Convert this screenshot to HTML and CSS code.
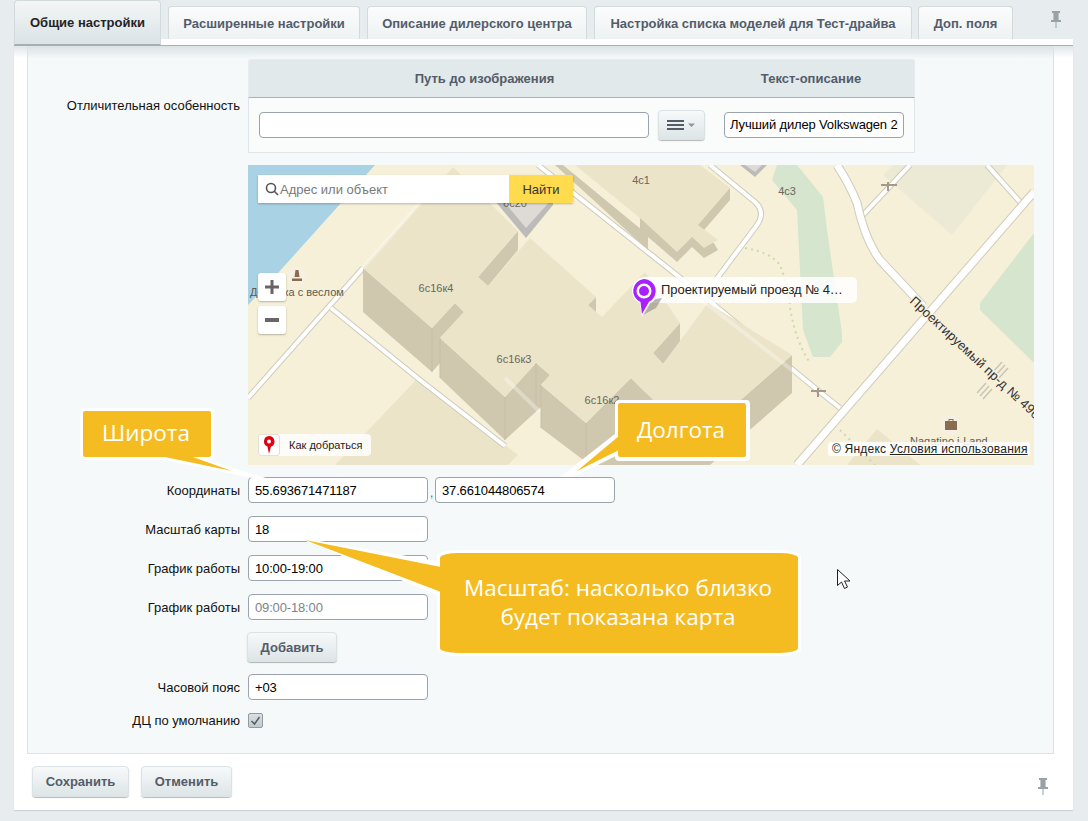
FILE: index.html
```html
<!DOCTYPE html>
<html lang="ru">
<head>
<meta charset="utf-8">
<title>Настройки</title>
<link rel="stylesheet" href="styles.css">
</head>
<body>
<div class="page">
  <nav class="tabs">
    <a class="tab tab-active">Общие настройки</a>
    <a class="tab tab-w1">Расширенные настройки</a>
    <a class="tab tab-w2">Описание дилерского центра</a>
    <a class="tab tab-w3">Настройка списка моделей для Тест-драйва</a>
    <a class="tab tab-w4">Доп. поля</a>
    <svg class="pin pin-top" width="12" height="17" viewBox="0 0 12 17"><path class="pin-fill" d="M2 0h8v2H8.600v7H11v2H6.500v6h-1v-6H1V9h2.400V2H2z"/></svg>
  </nav>
  <div class="panel">
    <div class="strip"></div>
    <div class="panel-body">
      <div class="inner">
        <div class="row row-table">
          <label class="lbl">Отличительная особенность</label>
          <div class="table">
            <div class="thead">
              <div class="th th-a">Путь до изображения</div>
              <div class="th th-b">Текст-описание</div>
            </div>
            <div class="tbody">
              <input class="inp inp-path" type="text" value="">
              <button class="menu-btn" type="button">
                <svg width="30" height="12" viewBox="0 0 30 12"><path class="menu-lines" d="M0 1h17v2H0zM0 5h17v2H0zM0 9h17v2H0z"/><path class="menu-caret" d="M21 4.500h7l-3.500 3.500z"/></svg>
              </button>
              <input class="inp inp-desc" type="text" value="Лучший дилер Volkswagen 2018">
            </div>
          </div>
        </div>

        <div class="map">
          <svg class="map-svg" width="786" height="300" viewBox="248 165 786 300">
            <rect class="ground" x="248" y="165" width="786" height="300"/>
            <polygon class="water" points="248,165 375,165 341,203 278,273 248,305"/>
            <polygon class="green" points="777,165 797,165 823,197 827,230 842,333 842,342 830,357 813,357 803,330 797,210 772,180"/>
            <polygon class="green" points="1034,233 980,303 980,310 1034,363"/>
            <polygon class="pale" points="883,175 893,165 1007,165 952,235"/>
            <polygon class="roof" points="877,429 920,465 847,465"/>
            <polygon class="roof" points="418,378 518,455 508,465 335,465"/>

            <g class="dots">
              <path d="M745 248 Q770 252 780 265 Q788 285 790 307 Q795 340 810 363"/>
              <path d="M840 430 L875 465"/>
            </g>

            <g class="road-out">
              <path d="M248 398 L363 268"/>
              <path d="M331 308 L420 380 L505 446"/>
              <path d="M538 165 L712 303"/>
              <path d="M710 165 L755 202 Q766 212 757 225 L712 285"/>
              <path d="M863 215 L910 165"/>
              <path d="M987 165 L1020 202"/>
              <path d="M840 408 L815 388 L712 303"/>
            </g>
            <g class="road-in">
              <path d="M248 398 L363 268"/>
              <path d="M331 308 L420 380 L505 446"/>
              <path d="M538 165 L712 303"/>
              <path d="M710 165 L755 202 Q766 212 757 225 L712 285"/>
              <path d="M863 215 L910 165"/>
              <path d="M987 165 L1020 202"/>
              <path d="M840 408 L815 388 L712 303"/>
            </g>
            <path class="big-out" d="M837 165 Q850 185 857 203 Q865 240 880 260 L923 306"/>
            <path class="big-in" d="M837 165 Q850 185 857 203 Q865 240 880 260 L923 306"/>
            <path class="big-out" d="M1034 192 L797 465"/>
            <path class="big-in" d="M1034 192 L797 465"/>

            <polygon class="wall" points="563,165 648,235 648,250 555,165"/>
            <polygon class="wall" points="730,188 730,200 704,230 712,240 718,250 704,258 692,247 677,262 640,230 640,218"/>
            <polygon class="roof" points="575,165 700,165 730,188 698,225 718,240 704,248 692,237 677,252 640,218"/>

            <polygon class="grey-wall" points="490,195 526,238 553,205 553,195"/>
            <polygon class="grey-top" points="490,185 526,228 553,198 530,175"/>
            <polygon class="grey-wall" points="740,165 755,177 767,165"/>
            <polygon class="grey-top" points="745,165 755,172 762,165"/>

            <polygon class="wall" points="363,268 432,328 432,372 363,312"/>
            <polygon class="wall" points="432,328 455,303 464,312 440,338 440,363 432,372"/>
            <polygon class="wall" points="440,338 505,397 505,440 440,378"/>
            <polygon class="wall" points="505,397 536,363 550,375 541,385 541,407 505,440"/>
            <polygon class="wall" points="541,385 586,423 586,462 541,428"/>
            <polygon class="wall" points="586,423 631,378 641,388 695,440 695,465 600,465 586,462"/>
            <polygon class="wall" points="792,355 792,393 710,465 680,465 695,440"/>
            <polygon class="wall" points="518,231 518,250 488,286 478,277"/>
            <polygon class="wall" points="596,297 596,313 588,305"/>
            <polygon class="wall" points="680,323 680,342 663,364 653,353"/>
            <polygon class="roof" points="363,268 453,167 518,231 478,277 488,286 530,238 596,297 588,305 602,317 645,272 680,323 653,353 663,364 708,303 792,355 695,440 641,388 631,378 586,423 541,385 550,375 536,363 505,397 440,338 464,312 455,303 432,328"/>
            <g class="seams">
              <path d="M432 328V372M440 338V378M505 397V440M536 363V407M541 385V428M586 423V462"/>
            </g>
            <g class="fade">
              <path d="M363 268 L421 202"/>
              <path d="M505 378 L540 412"/>
              <path d="M680 283 L815 388"/>
            </g>

            <text class="t-map" x="436" y="292" text-anchor="middle">6с16к4</text>
            <text class="t-map" x="514" y="363" text-anchor="middle">6с16к3</text>
            <text class="t-map" x="602" y="404" text-anchor="middle">6с16к2</text>
            <text class="t-map" x="641" y="184" text-anchor="middle">4с1</text>
            <text class="t-map" x="787" y="195" text-anchor="middle">4с3</text>
            <text class="t-map" x="515" y="207" text-anchor="middle">6с20</text>
            <text class="t-place" x="250" y="296">Девушка с веслом</text>
            <text class="t-place" x="910" y="445">Nagatino i-Land</text>

            <circle class="poi" cx="297" cy="276" r="10"/>
            <path class="poi-mark" d="M295.500 270h3l1 7h-5zM292 281v-2.500h10V281z"/>
            <circle class="poi" cx="951" cy="425" r="10"/>
            <path class="poi-mark" d="M945 421h3.500v-2h5v2h3.500v9h-12zM949.500 421h3v-1h-3z"/>

            <g class="sign">
              <path d="M881 185h16M888 182v9"/>
              <path d="M811 391h15M818 388v9"/>
            </g>
            <g class="stripes">
              <path d="M993 372l9-10M996 375l9-10M999 378l9-10"/>
              <path d="M977 393l9-10M980 396l9-10M983 399l9-10"/>
            </g>

            <text class="t-road" transform="translate(909 302) rotate(43)">Проектируемый пр-д № 49б</text>

            <rect class="bubble" x="640" y="277" width="217" height="26" rx="5"/>
            <text class="t-bubble" x="661" y="294">Проектируемый проезд № 4…</text>

            <polygon class="pin-shadow" points="643,315 650,300 662,298 656,308"/>
            <path class="marker-edge" d="M644 277a14 14 0 0 1 6 26.500L642 317l-2-13.500A14 14 0 0 1 644 277z"/>
            <path class="marker" d="M644 279a12 12 0 0 1 5 22.800L642 314l-1.500-12A12 12 0 0 1 644 279z"/>
            <circle class="marker-hole" cx="644" cy="291" r="7.500"/>
            <circle class="marker" cx="644" cy="291" r="5"/>
          </svg>

          <div class="search">
            <div class="search-field">
              <svg width="14" height="14" viewBox="0 0 14 14"><circle class="search-ic" cx="6" cy="6" r="4.500"/><path class="search-ic" d="M9.300 9.300L13 13"/></svg>
              <span class="search-ph">Адрес или объект</span>
            </div>
            <div class="search-btn">Найти</div>
          </div>
          <div class="zoom zoom-plus"><svg width="14" height="14" viewBox="0 0 14 14"><path class="zoom-ic" d="M5.500 0h3v5.500H14v3H8.500V14h-3V8.500H0v-3h5.500z"/></svg></div>
          <div class="zoom zoom-minus"><svg width="14" height="4" viewBox="0 0 14 4"><path class="zoom-ic" d="M0 0h14v4H0z"/></svg></div>
          <div class="route">
            <span class="route-ic"><svg width="12" height="18" viewBox="0 0 12 18"><path class="route-pin" d="M6 0a5.500 5.500 0 0 1 2 10.600L6 18l-1.500-7.400A5.500 5.500 0 0 1 6 0z"/><circle class="route-dot" cx="6" cy="5.500" r="2"/></svg></span>
            <span class="route-t">Как добраться</span>
          </div>
          <div class="copy">© Яндекс <u>Условия использования</u></div>
        </div>

        <div class="row row-gap12">
          <label class="lbl">Координаты</label>
          <input class="inp inp-f" type="text" value="55.693671471187">
          <span class="comma">,</span>
          <input class="inp inp-f" type="text" value="37.661044806574">
        </div>
        <div class="row row-gap13">
          <label class="lbl">Масштаб карты</label>
          <input class="inp inp-f" type="text" value="18">
        </div>
        <div class="row row-gap13">
          <label class="lbl">График работы</label>
          <input class="inp inp-f" type="text" value="10:00-19:00">
        </div>
        <div class="row row-gap13">
          <label class="lbl">График работы</label>
          <input class="inp inp-f inp-ph" type="text" value="09:00-18:00">
        </div>
        <div class="row row-gap12">
          <span class="lbl"></span>
          <button class="btn btn-add" type="button">Добавить</button>
        </div>
        <div class="row row-gap12">
          <label class="lbl">Часовой пояс</label>
          <input class="inp inp-f" type="text" value="+03">
        </div>
        <div class="row row-gap13 row-check">
          <label class="lbl">ДЦ по умолчанию</label>
          <span class="check"><svg width="11" height="10" viewBox="0 0 11 10"><path class="check-ic" d="M1.500 5l3 3 5-7"/></svg></span>
        </div>
      </div>
      <div class="footer">
        <button class="btn btn-save" type="button">Сохранить</button>
        <button class="btn btn-cancel" type="button">Отменить</button>
        <svg class="pin pin-bottom" width="12" height="17" viewBox="0 0 12 17"><path class="pin-fill" d="M2 0h8v2H8.600v7H11v2H6.500v6h-1v-6H1V9h2.400V2H2z"/></svg>
      </div>
    </div>
  </div>

  <svg class="notes" width="1088" height="821" viewBox="0 0 1088 821">
    <polygon class="n-w" points="155,458 193,456 266,478 262,480"/>
    <rect class="n-w" x="80" y="408" width="134" height="52" rx="4"/>
    <rect class="n-y" x="83" y="411" width="128" height="46" rx="2"/>
    <polygon class="n-y" points="160,456 190,456 232,471"/>
    <text class="n-t" x="146" y="441">Широта</text>

    <polygon class="n-w" points="620,430 560,477 573,477 620,454"/>
    <rect class="n-w" x="615" y="400" width="135" height="61" rx="4"/>
    <rect class="n-y" x="618" y="403" width="128" height="54" rx="2"/>
    <polygon class="n-y" points="619,436 577,471 619,450"/>
    <text class="n-t" x="681" y="438">Долгота</text>

    <polygon class="n-w" points="442,562 296,537 442,597"/>
    <rect class="n-w" x="437" y="550" width="364" height="106" rx="20" ry="7"/>
    <rect class="n-y" x="440" y="553" width="358" height="100" rx="18" ry="5"/>
    <polygon class="n-y" points="441,567 305,540 441,592"/>
    <text class="n-t" x="618" y="596">Масштаб: насколько близко</text>
    <text class="n-t" x="618" y="625">будет показана карта</text>

    <path class="cursor" d="M837.500 569.500v16l4-3.500 3 6.500 3-1.500-3-6h5.500z"/>
  </svg>
</div>
</body>
</html>
```

FILE: styles.css
```css
* { box-sizing: border-box; }
html, body { margin: 0; padding: 0; }
body {
  background: #e7edee;
  font-family: "Liberation Sans", Arial, sans-serif;
  font-size: 13px;
  color: #000;
}
.page {
  position: relative;
  width: 1088px;
  height: 821px;
  overflow: hidden;
  padding-left: 14px;
  padding-right: 15px;
}

/* tabs */
.tabs {
  display: flex;
  align-items: flex-end;
  height: 39px;
  position: relative;
  z-index: 2;
}
.tab {
  display: flex;
  align-items: center;
  justify-content: center;
  height: 33px;
  margin-right: 7px;
  font-weight: bold;
  color: #535c69;
  background: linear-gradient(#fbfcfc, #eef2f3);
  border: 1px solid #d3dadc;
  border-bottom: 0;
  border-radius: 4px 4px 0 0;
}
.tab-active {
  width: 147px;
  height: 45px;
  margin-bottom: -6px;
  margin-right: 7px;
  padding-bottom: 1px;
  color: #1f2328;
  background: linear-gradient(#f3f6f6, #dbe3e5);
  border-color: #d3dadc;
  border-bottom: 1px solid #a5b0b4;
}
.tab-w1 { width: 192px; }
.tab-w2 { width: 220px; }
.tab-w3 { width: 318px; margin-right: 6px; }
.tab-w4 { width: 95px; margin-right: 0; }
.pin { flex: none; }
.pin-top { margin-left: 37px; margin-bottom: 11px; }
.pin-fill { fill: #98a3a8; }

/* panel */
.panel { height: 771px; background: #fff; box-shadow: 0 1px 1px #c9d3d6; }
.strip { height: 7px; background: #fff; border-bottom: 1px solid #a5b0b4; }
.panel-body {
  height: 764px;
  display: flex;
  flex-direction: column;
  padding: 0 19px 0 13px;
  background: linear-gradient(#dfe6e8, #fff 12px);
}
.inner {
  height: 708px;
  padding: 13px 0 0;
  background: linear-gradient(#dbe3e5, #f5f9fa 13px);
  border-left: 1px solid #d9e4e8;
  border-right: 1px solid #d9e4e8;
  border-bottom: 1px solid #d9e4e8;
}
.row { display: flex; align-items: center; }
.row-table { height: 93px; }
.row-gap12 { margin-top: 12px; }
.row-gap13 { margin-top: 13px; }
.lbl {
  flex: none;
  width: 212px;
  margin-right: 8px;
  text-align: right;
  color: #111;
}

/* table */
.table { width: 667px; }
.thead {
  display: flex;
  height: 39px;
  background: #e1e9eb;
  border: 1px solid #e7edef;
  border-bottom: 1px solid #a9b3b7;
  border-radius: 3px 3px 0 0;
}
.th {
  display: flex;
  align-items: center;
  justify-content: center;
  font-weight: bold;
  color: #535c69;
}
.th-a { width: 471px; }
.th-b { width: 182px; }
.tbody {
  display: flex;
  align-items: center;
  height: 55px;
  padding-left: 10px;
  background: #fafcfc;
  border: 1px solid #dfe7ea;
  border-top: 0;
}

/* inputs */
.inp {
  display: block;
  height: 26px;
  padding: 0 6px;
  font: 13px "Liberation Sans", Arial, sans-serif;
  letter-spacing: -0.15px;
  color: #000;
  background: #fff;
  border: 1px solid #9aa3ae;
  border-radius: 4px;
  outline: 0;
}
.inp-path { width: 390px; }
.inp-desc { width: 180px; margin-left: 19px; padding: 0 5px; }
.inp-f { width: 180px; }
.inp-ph { color: #7d8489; }
.comma { width: 7px; text-align: center; align-self: flex-end; line-height: 20px; color: #2f7fc4; }
.menu-btn {
  display: flex;
  align-items: center;
  justify-content: center;
  width: 47px;
  height: 30px;
  margin-left: 9px;
  padding: 0;
  background: linear-gradient(#f7f9fa, #dde5e7);
  border: 1px solid #dbe2e4;
  border-radius: 4px;
  box-shadow: 0 1px 1px rgba(0, 0, 0, .28);
}
.menu-lines { fill: #535c69; }
.menu-caret { fill: #8e979c; }

/* map */
.map { position: relative; width: 786px; height: 300px; margin-top: 13px; margin-left: 220px; overflow: hidden; }
.map-svg { display: block; }
.ground { fill: #f6f0d9; }
.water { fill: #a9d2e5; }
.green { fill: #d5e5ce; }
.pale { fill: #ece9d4; }
.roof { fill: #ebe4c8; }
.wall { fill: #cfc8af; }
.grey-top { fill: #dedbd6; }
.grey-wall { fill: #bdbbb7; }
.seams path { fill: none; stroke: #c5bea5; stroke-width: 1; }
.fade path { fill: none; stroke: rgba(255, 255, 255, .3); stroke-width: 4; }
.road-out path { fill: none; stroke: #cfcbbb; stroke-width: 6; }
.road-in path { fill: none; stroke: #fff; stroke-width: 4; }
.big-out { fill: none; stroke: #cfcbbb; stroke-width: 9; }
.big-in { fill: none; stroke: #fff; stroke-width: 7; }
.dots path { fill: none; stroke: #c6dba9; stroke-width: 2; stroke-dasharray: 2 4; }
.t-map, .t-place, .t-bubble, .t-road { font-family: "Liberation Sans", Arial, sans-serif; }
.t-map { font-size: 11px; fill: #6b675c; }
.t-place { font-size: 11px; fill: #5d5a50; }
.t-road { font-size: 13px; letter-spacing: .15px; fill: #333; paint-order: stroke; stroke: #f6f0d9; stroke-width: 3px; }
.poi { fill: #f6f0e2; }
.poi-mark { fill: #8a6b4f; }
.sign path { fill: none; stroke: #a8978a; stroke-width: 2; }
.stripes path { fill: none; stroke: #c9c5b5; stroke-width: 1.5; }
.bubble { fill: rgba(255, 255, 255, .85); }
.t-bubble { font-size: 13px; fill: #222; letter-spacing: -.05px; }
.marker { fill: #a921ff; }
.marker-edge { fill: #fff; }
.marker-hole { fill: #fff; }
.pin-shadow { fill: #9d9a90; opacity: .7; }

.search {
  position: absolute;
  left: 10px;
  top: 10px;
  display: flex;
  width: 315px;
  height: 28px;
  box-shadow: 0 1px 2px rgba(0, 0, 0, .25);
}
.search-field {
  display: flex;
  align-items: center;
  flex: 1;
  padding-left: 7px;
  background: #fff;
}
.search-ic { fill: none; stroke: #555; stroke-width: 1.6; }
.search-ph { margin-left: 1px; font-size: 13px; color: #7a7a7a; }
.search-btn {
  display: flex;
  align-items: center;
  justify-content: center;
  width: 64px;
  font-size: 13px;
  color: #333;
  background: #ffdb4d;
  border-radius: 0 2px 2px 0;
}
.zoom {
  position: absolute;
  left: 10px;
  display: flex;
  align-items: center;
  justify-content: center;
  width: 28px;
  height: 28px;
  background: #fff;
  border-radius: 3px;
  box-shadow: 0 1px 2px rgba(0, 0, 0, .25);
}
.zoom-plus { top: 108px; }
.zoom-minus { top: 141px; }
.zoom-ic { fill: #666; }
.route {
  position: absolute;
  left: 10px;
  top: 269px;
  display: flex;
  align-items: center;
  width: 113px;
  height: 22px;
  background: rgba(255, 255, 255, .8);
  border-radius: 4px;
}
.route-ic {
  display: flex;
  align-items: center;
  justify-content: center;
  width: 22px;
  height: 22px;
  background: #fff;
  border: 1px solid #e3e0d5;
  border-radius: 3px;
}
.route-pin { fill: #e3000f; }
.route-dot { fill: #fff; }
.route-t { margin-left: 9px; font-size: 11px; color: #222; }
.copy {
  position: absolute;
  left: 580px;
  top: 277px;
  width: 202px;
  height: 14px;
  padding-left: 4px;
  font-size: 12px;
  line-height: 14px;
  letter-spacing: .22px;
  white-space: nowrap;
  color: #222;
  background: rgba(255, 255, 255, .85);
  border-radius: 3px;
}

/* buttons */
.btn {
  height: 31px;
  padding: 0;
  font: bold 13px "Liberation Sans", Arial, sans-serif;
  color: #535c69;
  background: linear-gradient(#f7f9fa, #dde5e7);
  border: 1px solid #dbe2e4;
  border-radius: 4px;
  box-shadow: 0 1px 1px rgba(0, 0, 0, .28);
}
.btn-add { width: 90px; height: 30px; margin-left: -1px; }
.btn-save { width: 97px; }
.btn-cancel { width: 91px; margin-left: 12px; }
.row-check { height: 15px; }
.check {
  display: flex;
  align-items: center;
  justify-content: center;
  width: 15px;
  height: 15px;
  background: linear-gradient(#d9dee1, #c3cace);
  border: 1px solid #8f9ba1;
  border-radius: 2px;
}
.check-ic { fill: none; stroke: #535c69; stroke-width: 1.5; }

.footer {
  display: flex;
  align-items: flex-start;
  height: 56px;
  padding: 12px 0 0 5px;
}
.pin-bottom { margin-left: auto; margin-top: 12px; margin-right: 5px; }

/* callouts */
.notes { position: absolute; left: 0; top: 0; pointer-events: none; }
.n-w { fill: #fff; }
.n-y { fill: #f5bc22; }
.n-t {
  font-family: "Open Sans", sans-serif;
  font-size: 22.5px;
  fill: #fff;
  text-anchor: middle;
}
.cursor { fill: #fff; stroke: #222; stroke-width: 1; }
```
